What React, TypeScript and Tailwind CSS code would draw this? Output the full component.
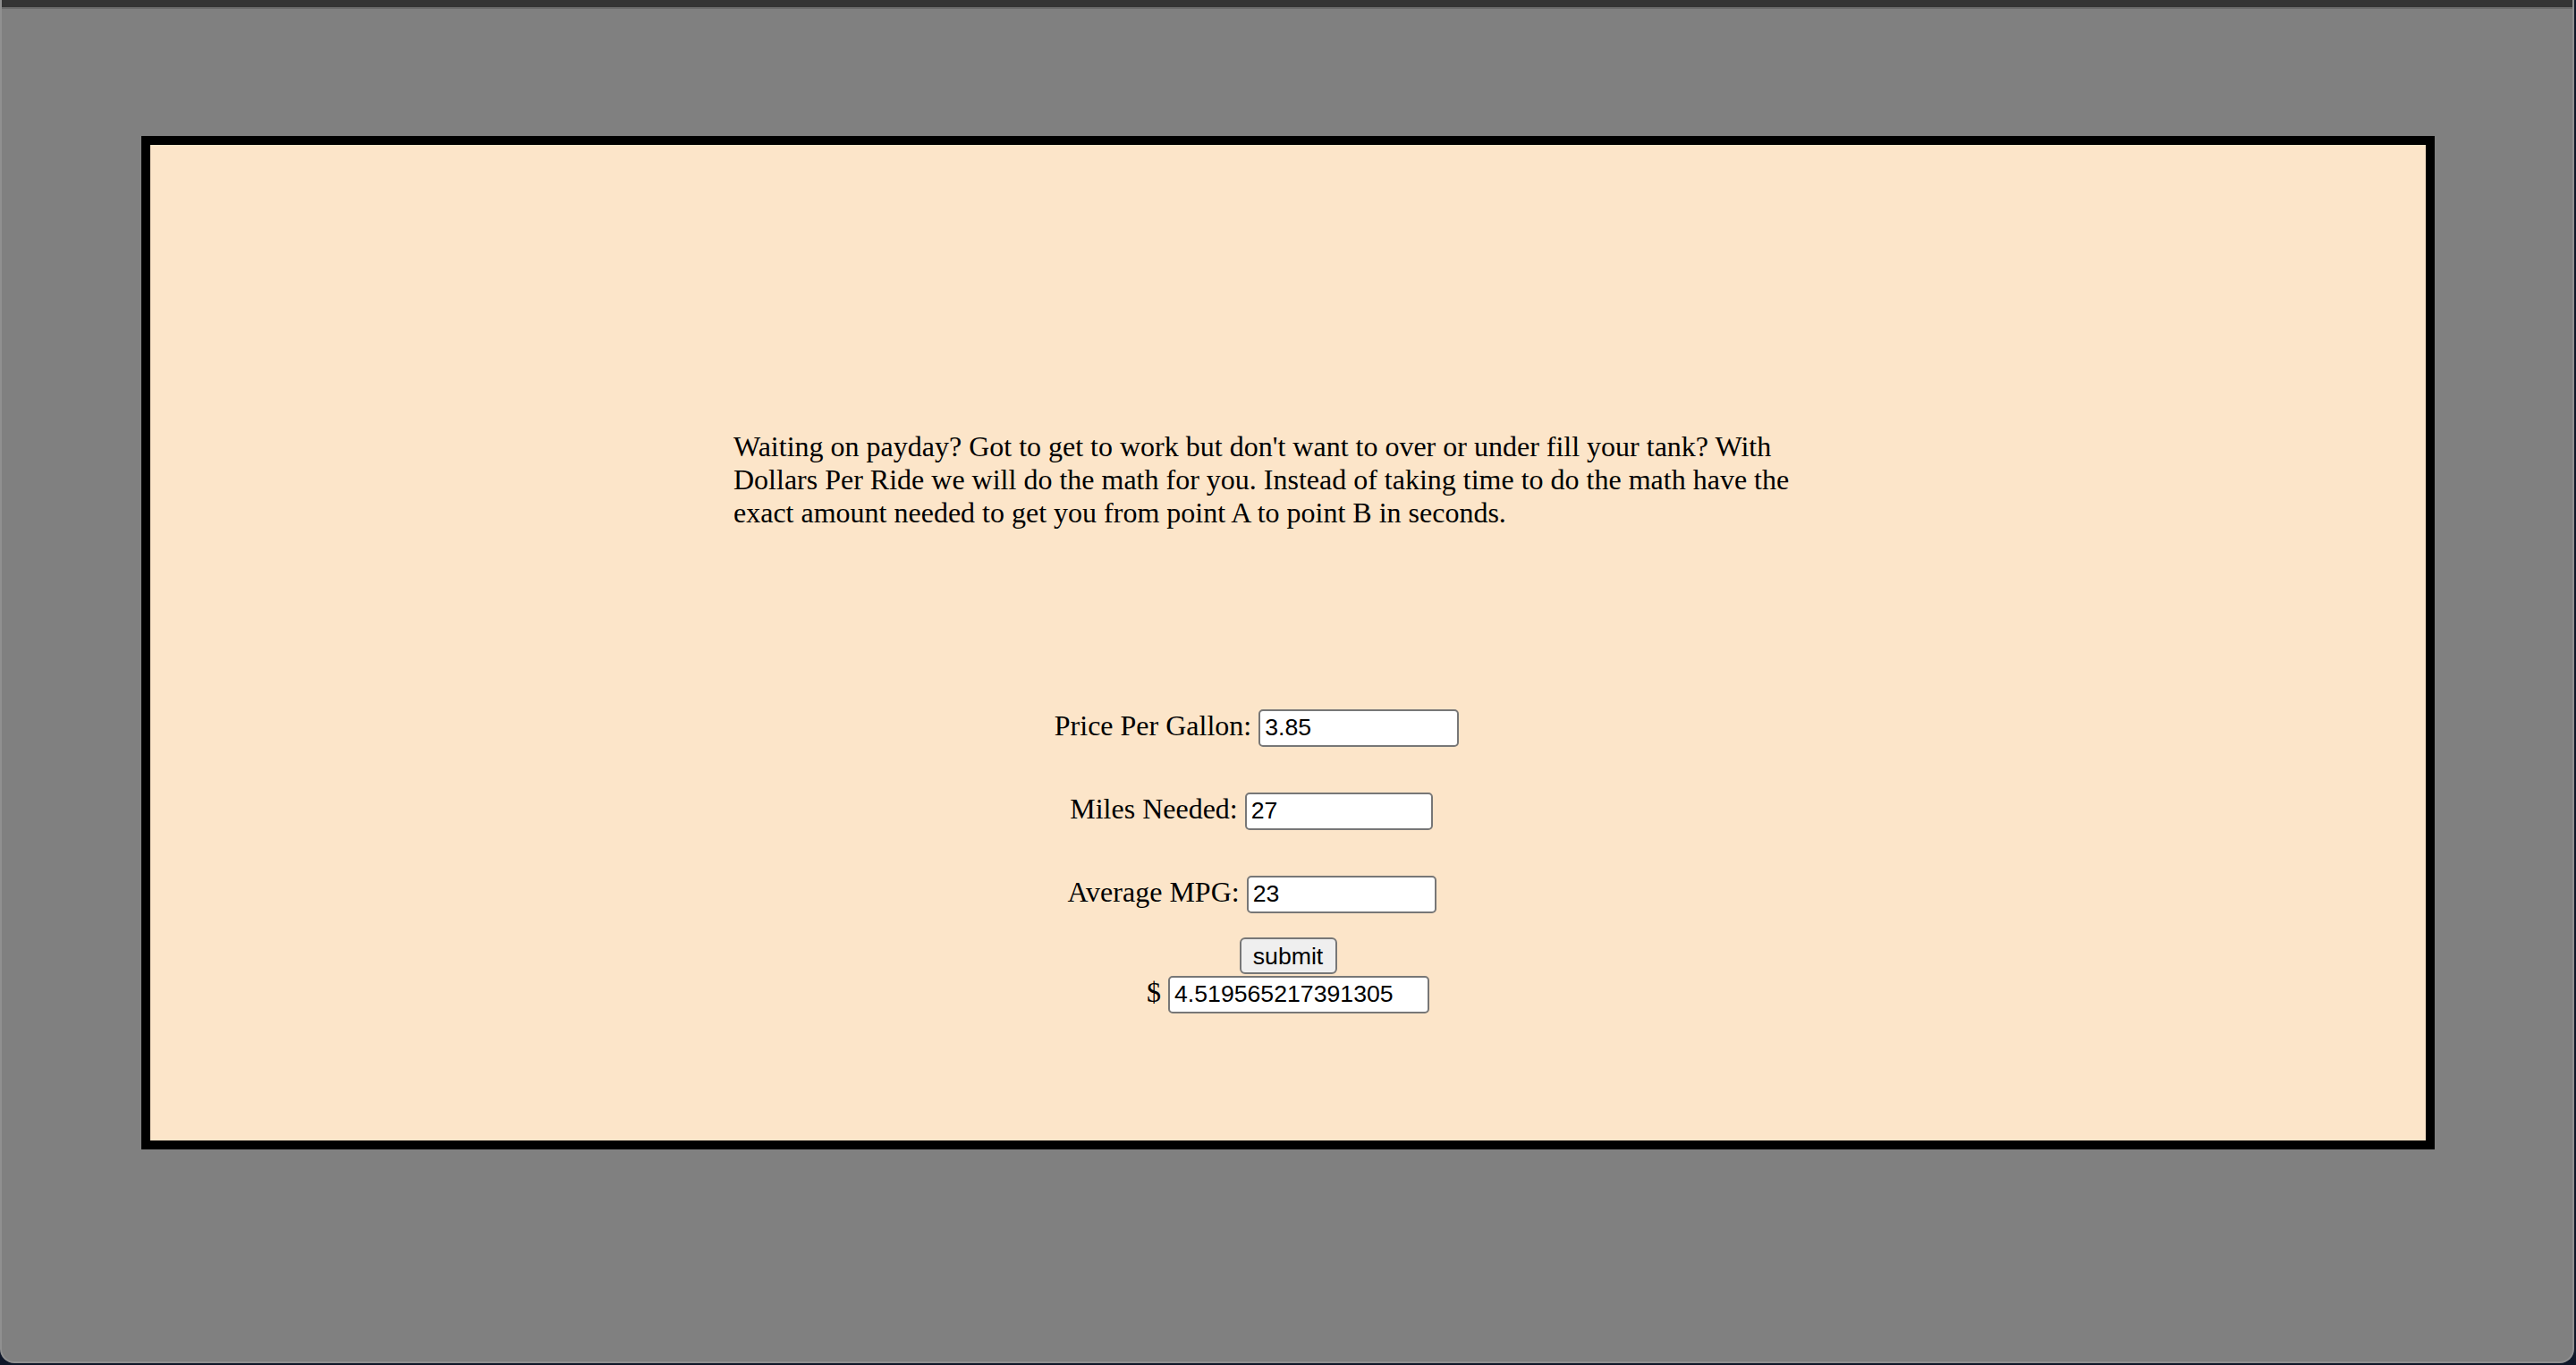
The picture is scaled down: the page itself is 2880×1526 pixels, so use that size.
import React from "react";

function Field({ label, value, width, pr }: { label: string; value: string; width: string; pr: string }) {
  return (
    <div className={`flex h-[42px] items-start justify-center gap-[8px] ${pr}`}>
      <span className="font-['Liberation_Serif',serif] text-[32px] leading-[36.8px] text-black">{label}</span>
      <input
        readOnly
        value={value}
        className={`${width} h-[42px] rounded-[5px] border-2 border-[#777777] bg-white px-[5px] pt-[3px] pb-[4px] font-['Liberation_Sans',Arial,sans-serif] text-[26.67px] leading-[30.6px] text-black outline-none`}
      />
    </div>
  );
}

export default function App() {
  return (
    <div className="h-[1526px] w-[2880px] overflow-hidden bg-[#0f1729]">
      <div className="flex h-[1524px] w-[2878px] flex-col overflow-hidden rounded-b-[16px] border-b-2 border-l-2 border-r-2 border-[#909090] bg-[#808080]">
        <div className="h-[8px] shrink-0 bg-[#343434]" />
        <div className="h-[2px] shrink-0 bg-[#6c6c6c]" />
        <div className="ml-[156px] mt-[142px] h-[1133px] w-[2564px] border-[10px] border-black bg-[#fce5c9]">
          <p className="mx-auto mt-[319px] w-[1240px] font-['Liberation_Serif',serif] text-[32px] leading-[36.8px] text-black">
            Waiting on payday? Got to get to work but don't want to over or under fill your tank? With Dollars Per Ride we will do the math for you. Instead of taking time to do the math have the exact amount needed to get you from point A to point B in seconds.
          </p>
          <div className="mt-[202px] flex flex-col">
            <Field label="Price Per Gallon:" value="3.85" width="w-[224px]" pr="pr-[70px]" />
            <div className="mt-[51px]">
              <Field label="Miles Needed:" value="27" width="w-[210px]" pr="pr-[82px]" />
            </div>
            <div className="mt-[51px]">
              <Field label="Average MPG:" value="23" width="w-[212px]" pr="pr-[81px]" />
            </div>
            <div className="mt-[27px] flex justify-center">
              <button className="h-[41px] w-[109px] rounded-[6px] border-2 border-[#777777] bg-[#efefef] font-['Liberation_Sans',Arial,sans-serif] text-[26.67px] leading-none text-black">
                submit
              </button>
            </div>
            <div className="mt-[2px] flex h-[42px] items-start justify-center gap-[8px]">
              <span className="font-['Liberation_Serif',serif] text-[32px] leading-[36.8px] text-black">$</span>
              <input
                readOnly
                value="4.519565217391305"
                className="h-[42px] w-[292px] rounded-[5px] border-2 border-[#777777] bg-white px-[5px] pt-[3px] pb-[4px] font-['Liberation_Sans',Arial,sans-serif] text-[26.67px] leading-[30.6px] text-black outline-none"
              />
            </div>
          </div>
        </div>
      </div>
    </div>
  );
}
